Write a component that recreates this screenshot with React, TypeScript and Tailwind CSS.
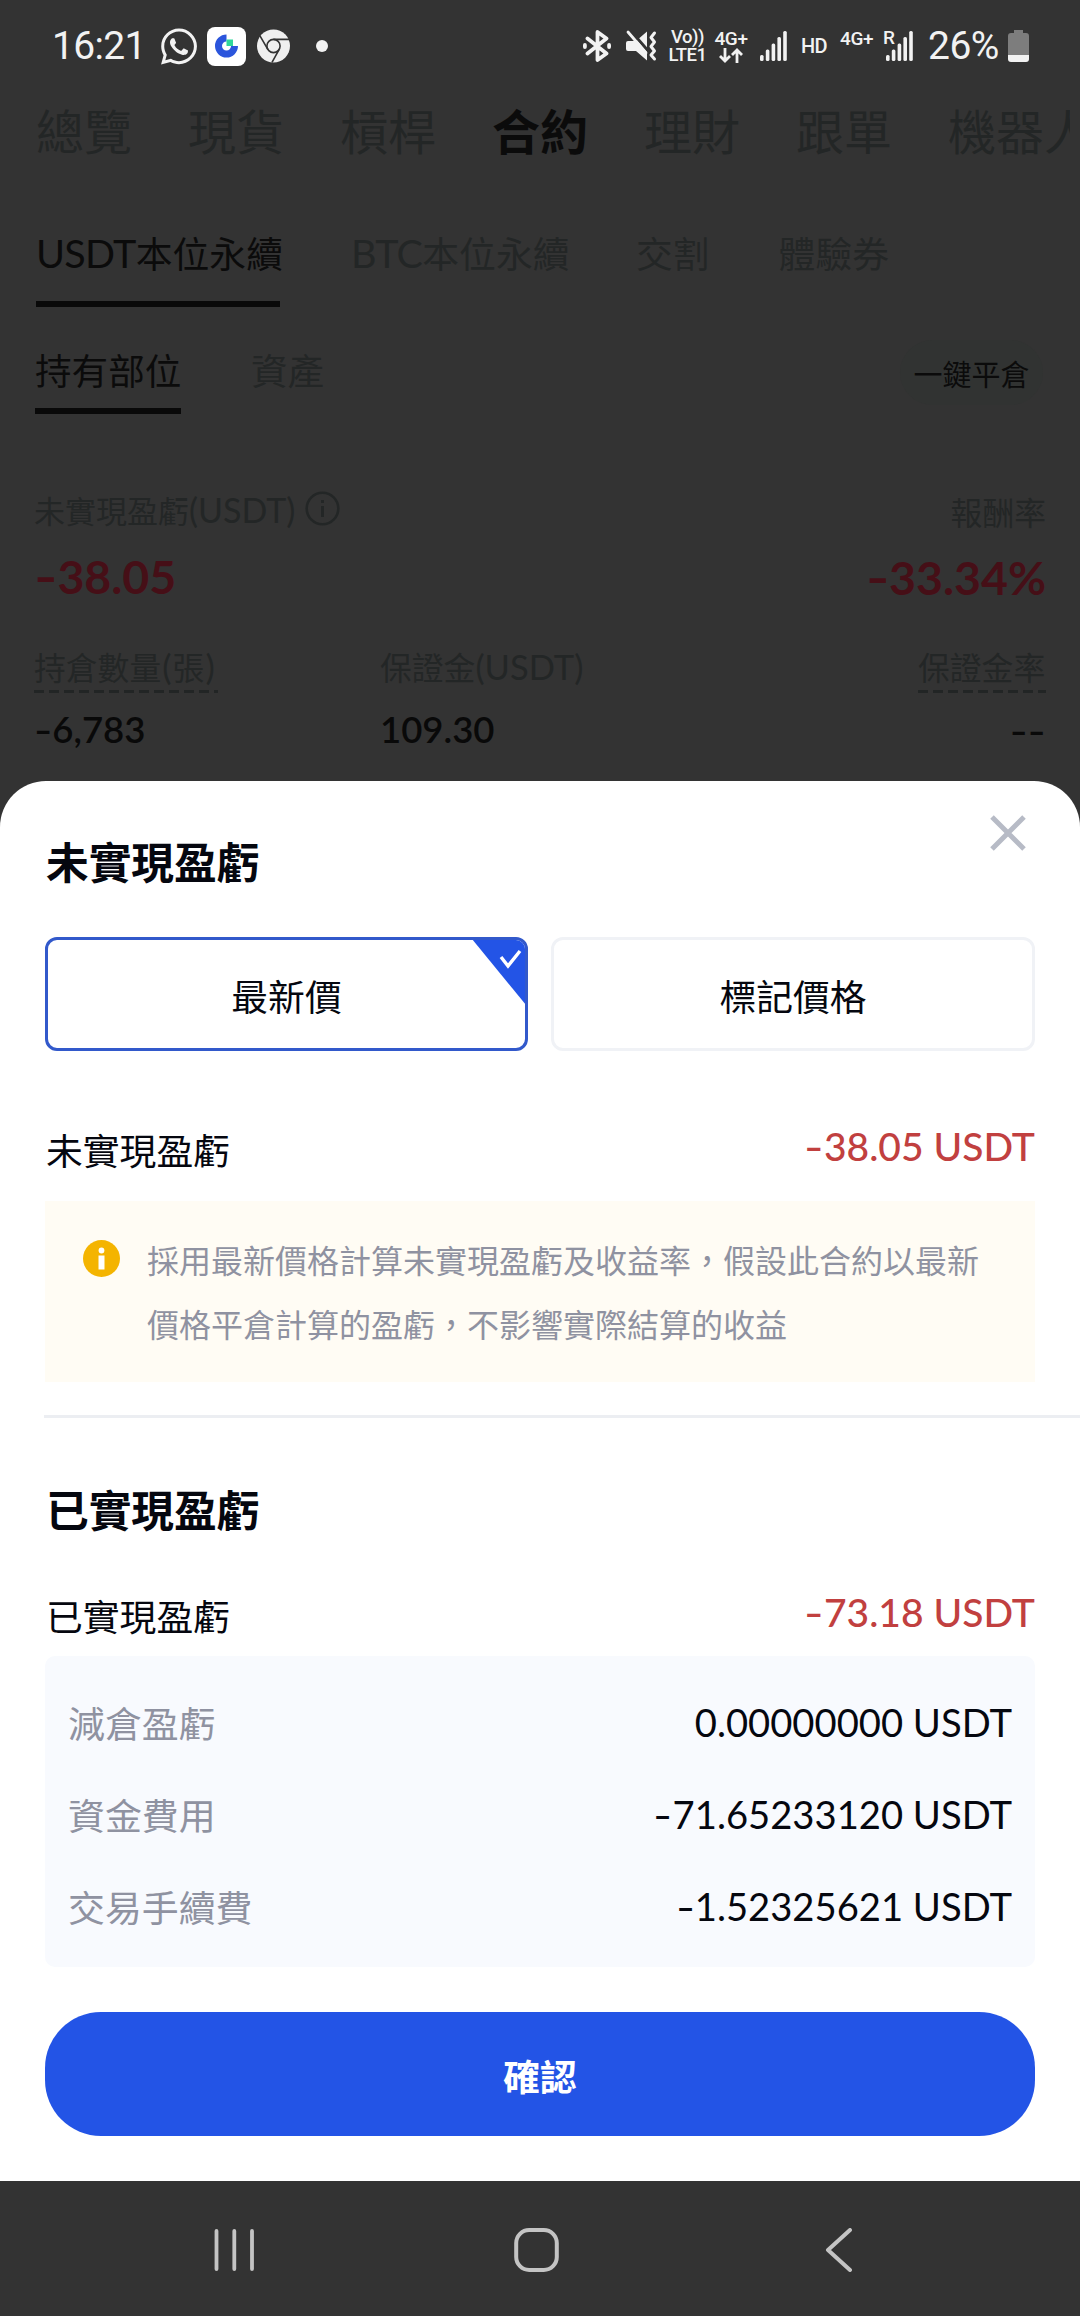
import React from 'react';
import { FaWhatsapp } from 'react-icons/fa';

const topTabs = ['總覽', '現貨', '槓桿', '合約', '理財', '跟單', '機器人'];

const fees = [
  { label: '減倉盈虧', value: '0.00000000 USDT' },
  { label: '資金費用', value: '-71.65233120 USDT' },
  { label: '交易手續費', value: '-1.52325621 USDT' },
];

// The hyphen is stretched a little so it reads as a minus sign
const Amount: React.FC<{ value: string; className?: string }> = ({ value, className = '' }) => {
  const negative = value.startsWith('-');
  return (
    <span className={`font-[Lato,sans-serif] whitespace-nowrap ${className}`}>
      {negative && <span className="inline-block origin-left scale-x-[1.35] mr-[0.13em]">-</span>}
      {negative ? value.slice(1) : value}
    </span>
  );
};

const SignalIcon: React.FC = () => (
  <svg width="27" height="30" viewBox="0 0 27 30" fill="#f2f2f2">
    <rect x="0" y="24" width="3.6" height="6" rx="1.5" />
    <rect x="5.8" y="18.5" width="3.6" height="11.5" rx="1.5" />
    <rect x="11.6" y="12.5" width="3.6" height="17.5" rx="1.5" />
    <rect x="17.4" y="6" width="3.6" height="24" rx="1.5" />
    <rect x="23.2" y="0" width="3.6" height="30" rx="1.5" />
  </svg>
);

const ChromeIcon: React.FC = () => (
  <svg width="33" height="34" viewBox="0 0 33 34">
    <circle cx="16.5" cy="17" r="16.5" fill="#efefef" />
    <g fill="none" stroke="#333" strokeWidth="1.6">
      <circle cx="16.5" cy="17" r="6.6" />
      <path d="M16.5 10.4H32M10.8 20.3L3 6.8M22.2 20.3L15 33.4" />
    </g>
  </svg>
);

const StatusBar: React.FC = () => (
  <div className="h-[92px] pl-[52px] pr-[51px] flex items-center justify-between text-[#f2f2f2] font-[Roboto,sans-serif]">
    <div className="flex items-center">
      <span className="w-[108px] text-[39px] leading-[46px] tracking-[-0.7px]">16:21</span>
      <FaWhatsapp className="w-[40px] h-[41px] -ml-[1px]" />
      <div className="ml-[8px] w-[39px] h-[39px] rounded-[8px] bg-white flex items-center justify-center">
        <svg width="23" height="24" viewBox="0 0 23 24">
          <path d="M11.5 4A8 8 0 1 0 19.5 12" fill="none" stroke="#2b55dc" strokeWidth="7" />
          <rect x="11.5" y="5.5" width="6.5" height="6.5" fill="#2fd79b" />
        </svg>
      </div>
      <div className="ml-[11px]"><ChromeIcon /></div>
      <div className="ml-[26px] w-3 h-3 rounded-full bg-[#f2f2f2]"></div>
    </div>
    <div className="flex items-center">
      <svg width="28" height="32" viewBox="0 0 28 32" fill="none" stroke="#f2f2f2" strokeWidth="3.8" strokeLinejoin="round" strokeLinecap="round">
        <path d="M4.5 8.5L23.5 23.5L14.5 30V2L23.5 8.5L4.5 23.5" />
        <path d="M1.9 15v2M26.1 15v2" />
      </svg>
      <svg className="ml-[15px]" width="31" height="32" viewBox="0 0 31 32">
        <path d="M2 11h8l11-9.5v29L10 21H2a2 2 0 0 1-2-2v-6a2 2 0 0 1 2-2z" fill="#f2f2f2" />
        <path d="M4 0L24 23" stroke="#333" strokeWidth="3" />
        <path d="M2 2L20 23" stroke="#f2f2f2" strokeWidth="2.8" strokeLinecap="round" />
        <path d="M28.5 3l-3.5 4.5l3.5 4.5l-3.5 4.5l3.5 4.5l-3.5 4l3.5 4" fill="none" stroke="#f2f2f2" strokeWidth="3" strokeLinecap="round" strokeLinejoin="round" />
      </svg>
      <div className="ml-[11px] w-[39px] text-[18.5px] font-medium flex flex-col items-center">
        <span className="h-[17px] leading-[17px] whitespace-nowrap tracking-tight">Vo))</span>
        <span className="h-[17px] leading-[18px] whitespace-nowrap tracking-tight">LTE1</span>
      </div>
      <div className="ml-[7px] w-[34px] flex flex-col items-center gap-px">
        <span className="text-[19px] leading-[17px] font-medium tracking-[-0.4px]">4G+</span>
        <svg width="24" height="15" viewBox="0 0 24 15" fill="none" stroke="#f2f2f2" strokeWidth="2.8">
          <path d="M6 0v13M1 8l5 5l5-5M18 15V2M13 7l5-5l5 5" />
        </svg>
      </div>
      <div className="ml-[12px]"><SignalIcon /></div>
      <span className="ml-[14px] w-[26px] text-[20px] leading-[20px] font-medium tracking-[-0.8px]">HD</span>
      <span className="ml-[13px] mb-[15px] w-[34px] text-[19px] leading-[17px] font-medium tracking-[-0.4px]">4G+</span>
      <div className="ml-[12px] relative">
        <SignalIcon />
        <span className="absolute -left-[3px] -top-[2px] w-[12px] h-[17px] bg-[#333] text-[19px] leading-[17px] font-medium">R</span>
      </div>
      <span className="ml-[15px] w-[75px] text-[39px] leading-[46px] tracking-[-0.5px]">26%</span>
      <svg className="ml-[5px]" width="21" height="32" viewBox="0 0 21 32">
        <path d="M6 0h9v3h3a3 3 0 0 1 3 3v19H0V6a3 3 0 0 1 3-3h3z" fill="#7d7d7d" />
        <path d="M0 25h21v4a3 3 0 0 1-3 3H3a3 3 0 0 1-3-3z" fill="#f2f2f2" />
      </svg>
    </div>
  </div>
);

const Dashes: React.FC = () => (
  <div className="h-[3px] bg-[repeating-linear-gradient(90deg,#222525_0_10px,transparent_10px_15px)]"></div>
);

const PositionsPage: React.FC = () => (
  <div className="h-[689px] text-[#232626]">
    <div className="ml-9 w-[1034px] h-[75px] overflow-hidden flex items-center gap-14 text-[48px] leading-[75px] whitespace-nowrap">
      {topTabs.map((tab) => (
        <span key={tab} className={tab === '合約' ? 'text-[#0b0b0b] font-bold' : ''}>{tab}</span>
      ))}
    </div>

    <div className="mt-[59px] pl-9 flex text-[36.8px] leading-[52px] whitespace-nowrap">
      <div className="w-[244px] h-[81px] border-b-[6px] border-[#090909] text-[#0b0b0b]">
        <span className="font-[Lato,sans-serif] text-[39.5px] tracking-[-0.7px]">USDT</span>本位永續
      </div>
      <div className="ml-[71px] w-[217px]">
        <span className="font-[Lato,sans-serif] text-[39.5px] tracking-[-0.7px]">BTC</span>本位永續
      </div>
      <div className="ml-[68px]">交割</div>
      <div className="ml-[69px]">體驗券</div>
    </div>

    <div className="mt-[33px] pl-[35px] pr-[37px] flex text-[36.6px] leading-[53px]">
      <div className="mt-[3px] w-[146px] h-[71px] border-b-[6px] border-[#090909] text-[#0b0b0b] whitespace-nowrap">持有部位</div>
      <div className="mt-[3px] ml-[70px]">資產</div>
      <div className="ml-auto w-[143px] h-[65px] rounded-full bg-[#313332] text-center text-[29px] leading-[67px] text-[#0b0b0b]">一鍵平倉</div>
    </div>

    <div className="mt-[76px] px-[34px] flex justify-between">
      <div>
        <div className="h-[40px] flex items-center text-[31px] leading-[42px]">
          未實現盈虧<span className="font-[Lato,sans-serif] text-[34px]">(USDT)</span>
          <svg className="ml-[10px] -mt-[3px]" width="35" height="35" viewBox="0 0 35 35" fill="none" stroke="#232626" strokeWidth="2.6">
            <circle cx="17.5" cy="17.5" r="15.8" />
            <path d="M17.5 15v11M17.5 9v3" strokeWidth="3" />
          </svg>
        </div>
        <Amount value="-38.05" className="block mt-4 text-[46.5px] leading-[61px] h-[60px] font-bold text-[#460f17]" />
      </div>
      <div className="text-right">
        <div className="h-[40px] text-[31.8px] leading-[42px]">報酬率</div>
        <Amount value="-33.34%" className="block mt-4 text-[46.5px] leading-[62px] h-[60px] font-bold text-[#460f17]" />
      </div>
    </div>

    <div className="mt-[39px] px-[34px] flex text-[31.8px] leading-[42px]">
      <div className="w-[346px]">
        <div className="w-[184px] h-[48px]">
          <div className="h-[45px] whitespace-nowrap">持倉數量<span className="font-[Lato,sans-serif] text-[35px] px-px">(</span>張<span className="font-[Lato,sans-serif] text-[35px] px-px">)</span></div>
          <Dashes />
        </div>
        <Amount value="-6,783" className="block mt-[11px] text-[36.5px] leading-[51px] h-[50px] font-semibold text-[#090909]" />
      </div>
      <div>
        <div className="h-[48px]">保證金<span className="font-[Lato,sans-serif] text-[34.5px]">(USDT)</span></div>
        <Amount value="109.30" className="block mt-[11px] text-[36.5px] leading-[51px] h-[50px] font-semibold text-[#090909]" />
      </div>
      <div className="ml-auto flex flex-col items-end">
        <div className="w-[128px] h-[48px]">
          <div className="h-[45px] whitespace-nowrap">保證金率</div>
          <Dashes />
        </div>
        <div className="mt-[11px] origin-right scale-x-[1.3] font-[Lato,sans-serif] text-[37px] leading-[52px] font-semibold text-[#090909]">--</div>
      </div>
    </div>
  </div>
);

const ProfitSheet: React.FC = () => (
  <div className="h-[1400px] rounded-t-[46px] bg-white text-[#05070f]">
    <div className="pl-[46px] pr-[54px] h-[156px] flex justify-between">
      <h2 className="mt-[49px] text-[42.7px] leading-[60px] font-bold">未實現盈虧</h2>
      <svg className="mt-[34px]" width="36" height="36" viewBox="0 0 36 36" stroke="#b7bbc6" strokeWidth="5">
        <path d="M2 2L34 34M34 2L2 34" />
      </svg>
    </div>

    <div className="px-[45px] flex gap-[23px] text-[36.8px] leading-[111px] text-center">
      <div className="relative w-[483px] h-[114px] rounded-[12px] border-[3px] border-[#3259cb] overflow-hidden">
        最新價
        <svg className="absolute -right-px -top-px" width="54" height="66" viewBox="0 0 54 66">
          <path d="M0 0H54V66z" fill="#2354e6" />
          <path d="M29 18l7 9l12-15" fill="none" stroke="#fff" strokeWidth="3.4" />
        </svg>
      </div>
      <div className="w-[484px] h-[114px] rounded-[12px] border-[3px] border-[#f0f2f6]">標記價格</div>
    </div>

    <div className="mt-[69px] pl-[46px] pr-[45px] h-[58px] flex justify-between text-[36.8px] leading-[59px]">
      <span>未實現盈虧</span>
      <Amount value="-38.05 USDT" className="-mt-[3px] text-[39px] font-medium text-[#c1403f]" />
    </div>

    <div className="mx-[45px] mt-[23px] h-[181px] bg-[#fffcf4] flex pl-[38px] pt-[26px] text-[32px] leading-[64px] text-[#8f92a1]">
      <svg className="mt-[13px] shrink-0" width="37" height="37" viewBox="0 0 37 37">
        <circle cx="18.5" cy="18.5" r="18.5" fill="#f4b400" />
        <circle cx="18.5" cy="10.5" r="2.9" fill="#fff" />
        <path d="M15.5 15.5h6V29.5h-6z" fill="#fff" />
      </svg>
      <p className="ml-[27px] w-[840px]">採用最新價格計算未實現盈虧及收益率，假設此合約以最新價格平倉計算的盈虧，不影響實際結算的收益</p>
    </div>

    <div className="mt-[33px] ml-[44px] h-[3px] bg-[#eceef2]"></div>

    <h2 className="mt-[60px] ml-[46px] h-[60px] text-[42.7px] leading-[60px] font-bold">已實現盈虧</h2>
    <div className="mt-[48px] pl-[46px] pr-[45px] h-[58px] flex justify-between text-[36.8px] leading-[59px]">
      <span>已實現盈虧</span>
      <Amount value="-73.18 USDT" className="-mt-[3px] text-[39px] font-medium text-[#c1403f]" />
    </div>

    <div className="mx-[45px] mt-[12px] h-[311px] rounded-[10px] bg-[#f8fafe] pt-[19px] pl-[23px] pr-[23px]">
      {fees.map((fee) => (
        <div key={fee.label} className="h-[92px] flex justify-between text-[36.9px] leading-[94px]">
          <span className="text-[#8f92a1]">{fee.label}</span>
          <Amount value={fee.value} className="text-[38.2px]" />
        </div>
      ))}
    </div>

    <div className="mx-[45px] mt-[45px] h-[124px] rounded-[56px] bg-[#2354e6] text-center text-[36.8px] leading-[127px] font-bold text-white">確認</div>
  </div>
);

const NavBar: React.FC = () => (
  <div className="h-[135px] flex pl-[214px] pt-[47px]">
    <svg width="40" height="44" viewBox="0 0 40 44" stroke="#c4c4c4" strokeWidth="3.8" strokeLinecap="round">
      <path d="M2.5 3v38M20.3 3v38M38 3v38" />
    </svg>
    <svg className="ml-[260px]" width="45" height="44" viewBox="0 0 45 44" fill="none" stroke="#c4c4c4" strokeWidth="4">
      <rect x="2.2" y="2" width="40.6" height="40" rx="13" />
    </svg>
    <svg className="ml-[266px]" width="28" height="44" viewBox="0 0 28 44" fill="none" stroke="#c4c4c4" strokeWidth="4" strokeLinecap="round" strokeLinejoin="round">
      <path d="M25 2L3 22L25 42" />
    </svg>
  </div>
);

const App: React.FC = () => (
  <div className="w-[1080px] h-[2316px] overflow-hidden bg-[#333] font-['Noto_Sans_CJK_TC',sans-serif]" lang="zh-Hant">
    <StatusBar />
    <PositionsPage />
    <ProfitSheet />
    <NavBar />
  </div>
);

export default App;
